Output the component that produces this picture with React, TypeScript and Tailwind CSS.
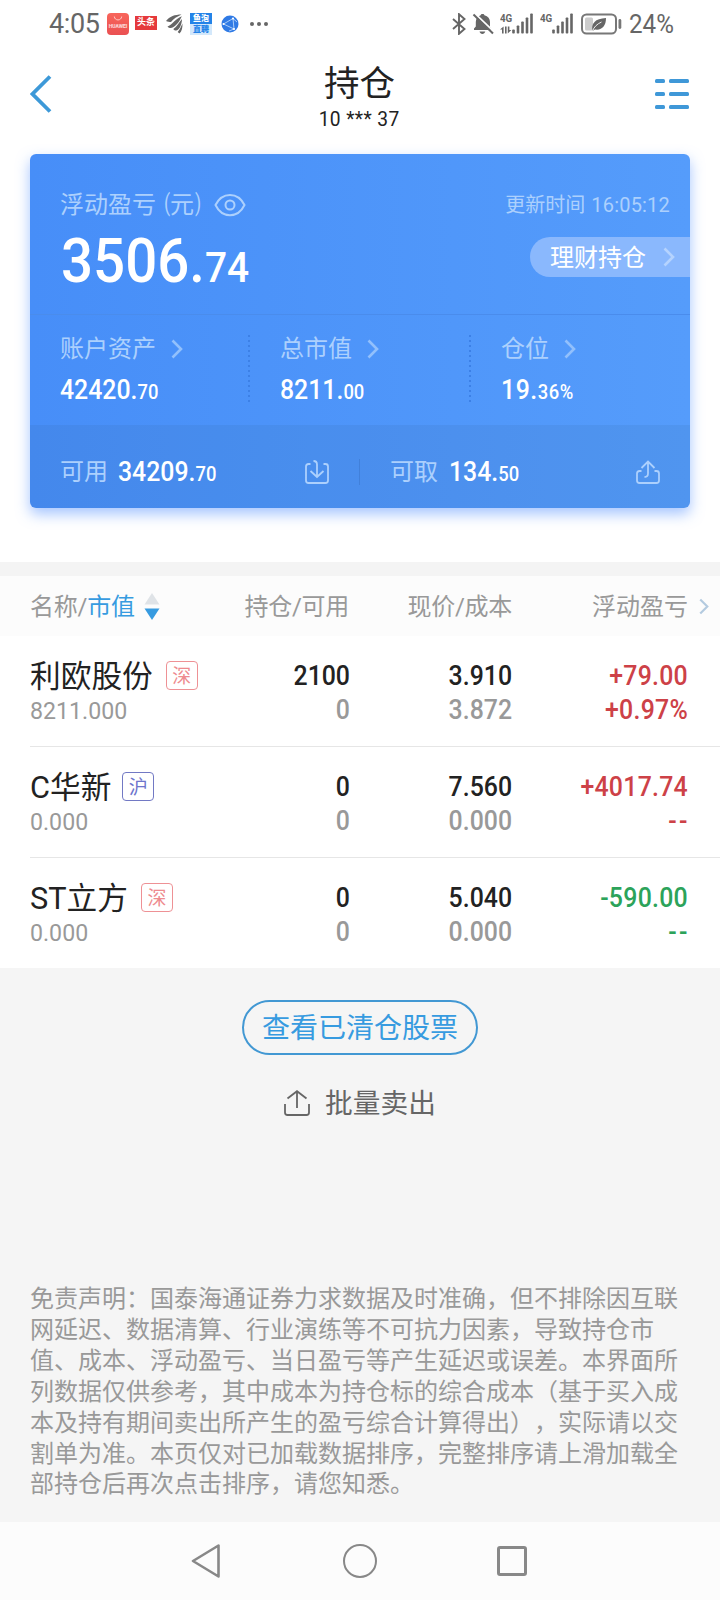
import type { ReactNode } from "react";
import clsx from "clsx";

type Holding = {
  name: string;
  market: "深" | "沪";
  value: string;
  amount: string;
  available: string;
  price: string;
  cost: string;
  profit: string;
  rate: string;
  up: boolean;
};

const holdings: Holding[] = [
  {
    name: "利欧股份",
    market: "深",
    value: "8211.000",
    amount: "2100",
    available: "0",
    price: "3.910",
    cost: "3.872",
    profit: "+79.00",
    rate: "+0.97%",
    up: true,
  },
  {
    name: "C华新",
    market: "沪",
    value: "0.000",
    amount: "0",
    available: "0",
    price: "7.560",
    cost: "0.000",
    profit: "+4017.74",
    rate: "--",
    up: true,
  },
  {
    name: "ST立方",
    market: "深",
    value: "0.000",
    amount: "0",
    available: "0",
    price: "5.040",
    cost: "0.000",
    profit: "-590.00",
    rate: "--",
    up: false,
  },
];

const disclaimer = [
  "免责声明：国泰海通证券力求数据及时准确，但不排除因互联",
  "网延迟、数据清算、行业演练等不可抗力因素，导致持仓市",
  "值、成本、浮动盈亏、当日盈亏等产生延迟或误差。本界面所",
  "列数据仅供参考，其中成本为持仓标的综合成本（基于买入成",
  "本及持有期间卖出所产生的盈亏综合计算得出），实际请以交",
  "割单为准。本页仅对已加载数据排序，完整排序请上滑加载全",
  "部持仓后再次点击排序，请您知悉。",
];

function Chevron({ className }: { className?: string }) {
  return (
    <svg
      viewBox="0 0 12 20"
      className={clsx("h-5 w-3 shrink-0", className)}
      fill="none"
      stroke="currentColor"
      strokeWidth="2.6"
    >
      <path d="M1.5 1.5 10 10l-8.5 8.5" />
    </svg>
  );
}

/* Integer part large, decimals small */
function Amount({ whole, rest }: { whole: string; rest: string }) {
  return (
    <span className="inline-block origin-left scale-x-[0.92] text-[27px] leading-8 font-medium whitespace-nowrap text-white">
      {whole}.<span className="text-[20px]">{rest}</span>
    </span>
  );
}

function Signal({ arrows }: { arrows?: boolean }) {
  return (
    <div className="relative h-[22px] w-[34px]">
      <span className="absolute -top-[1px] left-0 origin-left scale-x-[0.85] text-[11.500px] leading-[13px] font-bold">
        4G
      </span>
      <svg viewBox="0 0 34 22" className="h-[22px] w-[34px]" fill="#666">
        {arrows && <path d="M3.600 13.500v7H2v-4H0ZM5 13.500h1.600v7H5zM7.800 13.500v7l3.600-3.500H9.400v-3.500Z" />}
        <rect x="12.2" y="16.500" width="2.6" height="4" rx="0.8" />
        <rect x="16.7" y="12.500" width="2.6" height="8" rx="0.8" />
        <rect x="21.2" y="8.500" width="2.6" height="12" rx="0.8" />
        <rect x="25.7" y="4.500" width="2.6" height="16" rx="0.8" />
        <rect x="30.2" y="0.500" width="2.6" height="20" rx="0.8" />
      </svg>
    </div>
  );
}

function StatusBar() {
  return (
    <div className="flex h-[47px] items-center pl-[49px] text-[#666]">
      <span className="w-[58px] pt-[2px] text-[27px] tracking-[-0.4px]">4:05</span>
      <div className="flex h-[22px] w-[22px] flex-col items-center rounded-[4px] bg-gradient-to-b from-[#f8655b] to-[#ea5052]">
        <svg viewBox="0 0 22 10" className="h-[10px] w-[22px]" fill="none" stroke="#ffc9c4">
          <path d="M7.3 3.5c.4 4.6 7 4.6 7.4 0" />
        </svg>
        <span className="text-[5px] leading-[6px] font-bold text-white/80">HUAWEI</span>
      </div>
      <div className="-mt-[2px] ml-[6px] flex h-[14px] w-[22px] items-center justify-center bg-[#e5393c] text-[9px] leading-none font-bold text-white">
        头条
      </div>
      <svg viewBox="0 0 18 20" className="ml-[8px] h-5 w-[18px]" fill="#666">
        <path d="M1 7C4.500 2.500 10 .5 16.500.5 12 2.800 8.500 4.500 6 8 4.500 8 2.600 7.700 1 7Z" />
        <path d="M2.500 12.500C7 11 9.500 5.500 16.800 2.200 14.500 8 10.500 12.800 6 14 4.500 14 3.300 13.500 2.500 12.500Z" />
        <path d="M8.300 15C12 12.500 13.800 8.500 17 5 16.800 10 15 15.500 11.300 16.500 10 16.500 8.900 16 8.300 15Z" />
        <path d="M12.700 18C15 15.500 16 12.500 17.400 9.500 17.700 13 17 17 14.500 19.500Z" />
      </svg>
      <div className="ml-[7px] h-[22px] w-[22px] overflow-hidden bg-[#d3e8fb] text-center text-[8px] leading-[11px] font-black">
        <div className="h-[11px] bg-[#2383e8] text-white">鱼泡</div>
        <div className="h-[11px] text-[#2383e8]">直聘</div>
      </div>
      <svg viewBox="0 0 18 18" className="ml-[9px] h-[18px] w-[18px]" fill="none">
        <circle cx="9" cy="9" r="8.500" fill="#2f7ae5" />
        <path
          d="M2.500 9 12 3.500 13 14ZM12 3.500 16 7M13 14 8 16"
          stroke="#b5d5fb"
          strokeWidth="0.900"
        />
        <g fill="#fff">
          <circle cx="2.500" cy="9" r="1" />
          <circle cx="12" cy="3.500" r="1.100" />
          <circle cx="13" cy="14" r="1.100" />
        </g>
      </svg>
      <div className="ml-[11px] flex gap-[3px]">
        <i className="h-[4px] w-[4px] rounded-full bg-[#666]" />
        <i className="h-[4px] w-[4px] rounded-full bg-[#666]" />
        <i className="h-[4px] w-[4px] rounded-full bg-[#666]" />
      </div>

      <div className="ml-auto flex w-[268px] items-center">
        <svg viewBox="0 0 14 22" className="h-[22px] w-[14px]" fill="none" stroke="#666" strokeWidth="1.900">
          <path d="M1 6l11.500 10L7 20.800V1.200L12.500 6 1 16" />
        </svg>
        <svg viewBox="0 0 22 22" className="ml-[6px] h-[22px] w-[22px]" fill="#666">
          <path d="M10.500 1c1.200 0 1.800.6 1.900 1.200 3.700.9 5.600 3.400 5.600 6.800v5l2 3H2v-1.500l1.800-2V9c0-3.400 2.100-5.900 4.800-6.800C8.900 1.600 9.400 1 10.500 1ZM7.500 18.600h5.800c-.5 1.500-1.500 2.300-2.900 2.300s-2.500-.8-2.900-2.300Z" />
          <path d="M2.800.5 22 18.800" stroke="#fff" strokeWidth="2" />
          <path d="M1.500 1.500 21 20.500" stroke="#666" strokeWidth="2" />
        </svg>
        <div className="ml-[6px]">
          <Signal arrows />
        </div>
        <div className="ml-[6px]">
          <Signal />
        </div>
        <svg viewBox="0 0 42 22" className="ml-[7px] h-[22px] w-[42px]" fill="none">
          <rect x="1" y="1.500" width="34" height="19" rx="4.500" stroke="#777" strokeWidth="2" />
          <rect x="4" y="4.500" width="8" height="13" rx="1.500" fill="#ccc" />
          <path d="M11.500 18C10 10.500 14 5.500 25 5c0 8-4 12.500-11 11.500Z" fill="#666" />
          <path d="M11.500 18C13 14 16 11 20.500 9" stroke="#eee" strokeWidth="1" />
          <rect x="37.500" y="6" width="2.800" height="10" rx="1.400" fill="#777" />
        </svg>
        <span className="ml-[6px] origin-left scale-x-[0.93] pt-[2px] text-[26px]">24%</span>
      </div>
    </div>
  );
}

function Header() {
  return (
    <header className="flex h-[107px] items-start justify-between pr-[31px] pl-[30px]">
      <svg viewBox="0 0 34 38" className="mt-[28px] h-[38px] w-[34px]" fill="none" stroke="#3d99d8" strokeWidth="3.800">
        <path d="M20 1.500 2.500 19 20 36.500" />
      </svg>
      <div className="flex flex-col items-center text-[#222]">
        <h1 className="mt-[16px] h-[42px] text-[35.500px] leading-[42px]">持仓</h1>
        <span className="mt-[2px] scale-x-[0.96] text-[20px] leading-6 tracking-[0.4px]">10 *** 37</span>
      </div>
      <svg viewBox="0 0 34 30" className="mt-[32px] h-[30px] w-[34px]" fill="#3f98d8">
        {[0, 13, 26].map((y) => (
          <g key={y}>
            <rect x="0" y={y} width="10" height="4" rx="1.500" />
            <rect x="14" y={y} width="20" height="4" rx="1.500" />
          </g>
        ))}
      </svg>
    </header>
  );
}

function AssetCell({
  label,
  children,
  className,
}: {
  label: string;
  children: ReactNode;
  className?: string;
}) {
  return (
    <div className={clsx("flex flex-col", className)}>
      <div className="flex h-7 items-center text-[24px] leading-7 text-[#acd0fd]">
        {label}
        <Chevron className="ml-[15px] text-[#92c0fc]" />
      </div>
      <div className="mt-[11px] h-8">{children}</div>
    </div>
  );
}

function DottedLine() {
  return (
    <div className="h-[68px] w-[2px] bg-[repeating-linear-gradient(to_bottom,#3c80e6_0_2px,transparent_2px_5px)]" />
  );
}

function AccountCard() {
  return (
    <section className="mx-[30px] h-[354px] rounded-[6px] bg-gradient-to-r from-[#478ef8] to-[#559cfb] shadow-[0_6px_14px_rgba(75,140,255,0.5)]">
      <div className="flex h-[161px] justify-between border-b border-[#4a8cec] pl-[30px]">
        <div className="pt-[36px]">
          <div className="flex h-[30px] items-center text-[24px] leading-[30px] text-[#acd0fd]">
            浮动盈亏
            <span className="ml-[7px] flex items-center">
              <span className="relative -top-[2px] w-[7px] scale-x-75">(</span>元
              <span className="relative -top-[2px] w-[7px] scale-x-75">)</span>
            </span>
            <svg viewBox="0 0 32 24" className="ml-[13px] h-6 w-8" fill="none" stroke="#acd0fd" strokeWidth="2">
              <path d="M1.500 12C8-1.500 24-1.500 30.500 12 24 25.500 8 25.500 1.500 12Z" />
              <circle cx="16" cy="12" r="4.500" />
            </svg>
          </div>
          <div className="mt-[6px] h-[70px] origin-left translate-x-px scale-x-[0.925] text-[61px] leading-[70px] font-medium whitespace-nowrap text-white">
            3506.<span className="text-[42px]">74</span>
          </div>
        </div>
        <div className="flex flex-col items-end">
          <div className="mt-[39px] mr-[20px] flex h-6 items-center text-[20px] leading-6 text-[#acd0fd]">
            更新时间
            <span className="ml-[6px] tracking-[0.2px]">16:05:12</span>
          </div>
          <div className="mt-[20px] flex h-10 w-[160px] items-center rounded-l-full bg-[#8ab8fd] pl-[20px] text-[24px] text-white">
            <span className="pt-[2px]">理财持仓</span>
            <Chevron className="ml-[17px] text-[#b5d3fe]" />
          </div>
        </div>
      </div>

      <div className="flex h-[110px] items-start pt-[20px]">
        <AssetCell label="账户资产" className="ml-[30px] w-[188px]">
          <Amount whole="42420" rest="70" />
        </AssetCell>
        <DottedLine />
        <AssetCell label="总市值" className="ml-[30px] w-[189px]">
          <Amount whole="8211" rest="00" />
        </AssetCell>
        <DottedLine />
        <AssetCell label="仓位" className="ml-[30px]">
          <span className="tracking-[0.6px]">
            <Amount whole="19" rest="36%" />
          </span>
        </AssetCell>
      </div>

      <div className="flex h-[83px] items-center rounded-b-[6px] bg-[#2f60a0]/12 pt-[11px] pl-[30px] text-[24px] text-[#acd0fd]">
        <span className="w-[58px]">可用</span>
        <span className="w-[187px] pt-px">
          <Amount whole="34209" rest="70" />
        </span>
        <svg viewBox="0 0 24 24" className="-mt-px h-6 w-6" fill="none" stroke="currentColor" strokeWidth="1.800">
          <path d="M5.500 4H3.500Q1 4 1 6.500v14Q1 23 3.500 23h17q2.500 0 2.500-2.500v-14Q23 4 20.500 4h-2M8.500 1q3.500 0 3.500 3.500V17M5.500 11l6.500 6 6.500-6" />
        </svg>
        <i className="ml-[30px] h-[26px] w-px bg-[#4180da]" />
        <span className="ml-[30px] w-[59px]">可取</span>
        <span className="pt-px">
          <Amount whole="134" rest="50" />
        </span>
        <svg viewBox="0 0 24 24" className="-mt-px mr-[30px] ml-auto h-6 w-6" fill="none" stroke="currentColor" strokeWidth="1.800">
          <path d="M5.500 11h-2Q1 11 1 13.500v7Q1 23 3.500 23h17q2.500 0 2.500-2.500v-7Q23 11 20.500 11h-2M8.500 17q3.500 0 3.500-3.500V1.500M5.500 8 12 1.500 18.500 8" />
        </svg>
      </div>
    </section>
  );
}

function HoldingCell({ top, bottom, className }: { top: string; bottom: string; className?: string }) {
  return (
    <div
      className={clsx(
        "flex shrink-0 origin-right scale-x-[0.92] flex-col items-end pt-[23px] text-[27px] leading-[34px] font-medium",
        className
      )}
    >
      <span>{top}</span>
      {bottom === "--" ? <span className="-mr-[2px] tracking-[2.500px]">--</span> : <span>{bottom}</span>}
    </div>
  );
}

function HoldingRow({ item }: { item: Holding }) {
  return (
    <li className="ml-[30px] flex h-[111px] border-b border-[#e6e6e6] last:border-b-0">
      <div className="w-[210px] shrink-0 pt-[22px]">
        <div className="flex h-[38px] items-center leading-[38px] whitespace-nowrap text-[#222]">
          <span className="text-[30.700px]">{item.name}</span>
          <span
            className={clsx(
              "-mt-[3px] flex h-[29px] w-8 items-center justify-center rounded-[4px] border pt-px text-[19px] leading-none",
              item.name === "C华新" ? "ml-[11px]" : "ml-[13px]",
              item.market === "深" ? "border-[#ee9195] text-[#ee8b8f]" : "border-[#7279c4] text-[#6d74cc]"
            )}
          >
            {item.market}
          </span>
        </div>
        <div className="origin-left scale-x-[0.965] text-[24px] leading-[30px] text-[#999]">{item.value}</div>
      </div>
      <HoldingCell
        top={item.amount}
        bottom={item.available}
        className="w-[110px] text-[#222] [&>span:last-child]:text-[#999]"
      />
      <HoldingCell
        top={item.price}
        bottom={item.cost}
        className="w-[162px] text-[#222] [&>span:last-child]:text-[#999]"
      />
      <HoldingCell
        top={item.profit}
        bottom={item.rate}
        className={clsx("w-[176px] tracking-[0.3px]", item.up ? "text-[#cd4147]" : "text-[#2ca35a]")}
      />
    </li>
  );
}

export default function App() {
  return (
    <div
      lang="zh-CN"
      className="flex h-[1600px] w-[720px] flex-col overflow-hidden bg-white font-[Roboto,'Noto_Sans_CJK_SC',sans-serif]"
    >
      <StatusBar />
      <Header />
      <AccountCard />

      {/* Holdings table */}
      <div className="mt-[54px] h-[14px] bg-[#f4f4f4]" />
      <div className="flex h-[60px] items-center bg-[#fcfcfc] pl-[30px] text-[24px] text-[#999]">
        <div className="flex w-[210px] items-center tracking-[-0.2px]">
          <span className="pt-px">
            名称/<span className="text-[#379be0]">市值</span>
          </span>
          <svg viewBox="0 0 16 27" className="ml-[9px] h-[27px] w-4">
            <path d="M8 0 15.500 11.500H.5Z" fill="#dfe3e7" />
            <path d="M8 27 15.500 15.500H.5Z" fill="#379be0" />
          </svg>
        </div>
        <span className="w-[109px] pt-px text-right tracking-[-0.3px]">持仓/可用</span>
        <span className="w-[163px] pt-px text-right tracking-[-0.3px]">现价/成本</span>
        <span className="w-[176px] pt-px text-right">浮动盈亏</span>
        <Chevron className="ml-[11px] h-[17px] w-[10px] text-[#b4cbe0]" />
      </div>
      <ul className="h-[332px]">
        {holdings.map((item) => (
          <HoldingRow key={item.name} item={item} />
        ))}
      </ul>

      {/* Actions and disclaimer */}
      <main className="flex h-[554px] flex-col items-center bg-[#f5f5f5] pt-[32px]">
        <button className="h-[55px] w-[236px] rounded-full border-2 border-[#4298d3] pt-[3px] text-[28px] leading-none text-[#379be0]">
          查看已清仓股票
        </button>
        <button className="mt-[30px] flex h-[38px] items-center text-[27.700px] leading-none text-[#666]">
          <svg viewBox="0 0 26 26" className="-mt-[3px] mr-[15px] h-[26px] w-[26px]" fill="none" stroke="#666" strokeWidth="1.800">
            <path d="M1 14v8.500Q1 25 3.500 25h19q2.500 0 2.500-2.500V14M13 18V1.500M3.500 8.500 13 1.200l9.500 7.300" />
          </svg>
          批量卖出
        </button>
        <div className="mt-[161px] w-[660px] text-[24px] leading-[30.900px] whitespace-nowrap text-[#999] [text-spacing-trim:space-all]">
          {disclaimer.map((line) => (
            <p key={line}>{line}</p>
          ))}
        </div>
      </main>

      {/* System navigation */}
      <nav className="flex h-[78px] items-center bg-[#fcfcfc] pl-[191px]">
        <svg viewBox="0 0 30 34" className="h-[34px] w-[30px]" fill="none" stroke="#888" strokeWidth="2.600" strokeLinejoin="round">
          <path d="M27.500 1.500v31L2 17Z" />
        </svg>
        <i className="ml-[122px] h-[34px] w-[34px] rounded-full border-[2.600px] border-[#888]" />
        <i className="ml-[120px] h-[30px] w-[30px] rounded-[3px] border-[3px] border-[#888]" />
      </nav>
    </div>
  );
}
